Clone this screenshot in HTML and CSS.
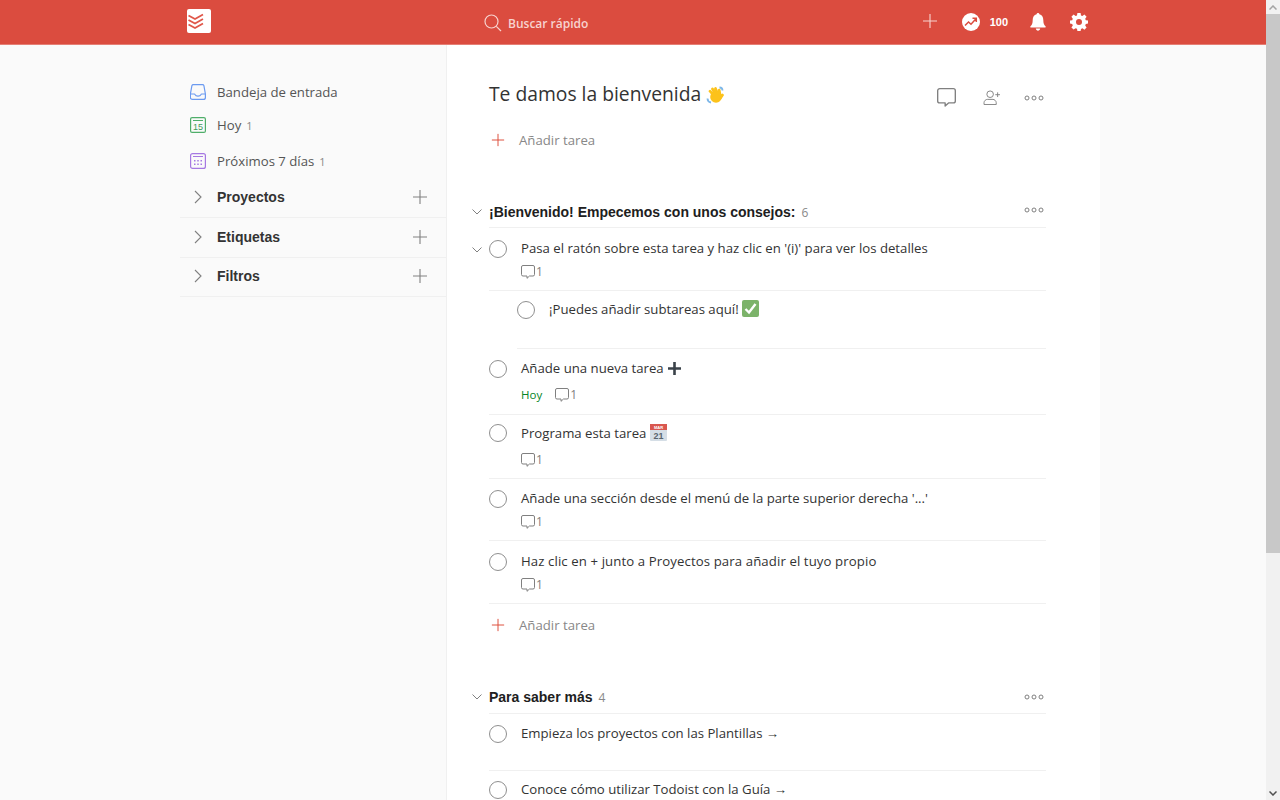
FILE: index.html
```html
<!DOCTYPE html>
<html lang="es">
<head>
    <meta charset="utf-8">
    <title>Te damos la bienvenida: Todoist</title>
    <link rel="stylesheet" href="styles.css">
</head>
<body>
    <svg class="sprites" width="0" height="0">
        <symbol id="chevron-down" viewBox="0 0 10 6"><path d="M.5.5 5 5 9.500.5" fill="none" stroke="currentColor"/></symbol>
        <symbol id="chevron-right" viewBox="0 0 8 14"><path d="M1 1l6 6-6 6" fill="none" stroke="currentColor" stroke-width="1.100"/></symbol>
        <symbol id="plus" viewBox="0 0 16 16"><path d="M8 1v14M1 8h14" fill="none" stroke="currentColor" stroke-width="1.100"/></symbol>
        <symbol id="dots" viewBox="0 0 20 6"><g fill="none" stroke="currentColor"><circle cx="3" cy="3" r="2"/><circle cx="10" cy="3" r="2"/><circle cx="17" cy="3" r="2"/></g></symbol>
        <symbol id="comment" viewBox="0 0 14 14"><path d="M2 .5h10A1.500 1.500 0 0 1 13.500 2v7.500A1.500 1.500 0 0 1 12 11H8.500L6 13.300V11H2A1.500 1.500 0 0 1 .5 9.500V2A1.500 1.500 0 0 1 2 .5z" fill="none" stroke="currentColor" stroke-linejoin="round"/></symbol>
    </svg>

    <div class="window">
        <div class="app">
            <header class="topbar">
                <div class="topbar-inner">
                    <a class="logo">
                        <svg width="24" height="24" viewBox="0 0 24 24">
                            <rect width="24" height="24" rx="2" fill="#fff"/>
                            <path d="M1.500 6.500l6.500 3.500L16 5.500M1.500 11l6.500 3.500L16 10M1.500 15.500l6.500 3.500L16 14.500" fill="none" stroke="#e0574a" stroke-width="1.800"/>
                        </svg>
                    </a>
                    <div class="search">
                        <svg width="18" height="18" viewBox="0 0 18 18"><circle cx="7.500" cy="7.500" r="6.500" fill="none" stroke="#f7d3cf" stroke-width="1.200"/><path d="M12.300 12.300 17 17" stroke="#f7d3cf" stroke-width="1.200"/></svg>
                        <span>Buscar rápido</span>
                    </div>
                    <div class="top-actions">
                        <svg class="top-plus" width="16" height="16"><use href="#plus"/></svg>
                        <svg class="karma-icon" width="18" height="18" viewBox="0 0 18 18">
                            <circle cx="9" cy="9" r="9" fill="#fff"/>
                            <path d="M3 12.500l3.500-3.500 2.500 2.300L14 5.800M10.500 5.300H14.300V9" fill="none" stroke="#db4c3f" stroke-width="1.500"/>
                        </svg>
                        <span class="karma">100</span>
                        <svg class="bell" width="16" height="18" viewBox="0 0 16 18"><path d="M8 0c.8 0 1.400.6 1.400 1.300C12 2 13.300 4 13.300 7c0 3.500.8 5 2.200 6.200.5.500.2 1.300-.5 1.300H1c-.7 0-1-.8-.5-1.300C1.900 12 2.700 10.500 2.700 7c0-3 1.300-5 3.900-5.700C6.600.6 7.200 0 8 0zM5.800 15.500h4.400C10 16.900 9.100 17.700 8 17.700s-2-.8-2.200-2.200z" fill="#fff"/></svg>
                        <svg class="gear" width="18" height="18" viewBox="0 0 18 18"><path fill="#fff" fill-rule="evenodd" d="M7.400 0h3.200l.4 2.400 1.400.6 2-1.400 2.200 2.200-1.400 2 .6 1.400 2.200.4v3l-2.200.5-.6 1.400 1.400 2-2.200 2.200-2-1.400-1.400.6-.4 2.100H7.400L7 15.800l-1.400-.6-2 1.400-2.200-2.200 1.400-2-.6-1.400L0 10.600v-3l2.200-.4.6-1.400-1.400-2 2.200-2.200 2 1.400L7 2.400zM9 6a3 3 0 1 0 0 6 3 3 0 0 0 0-6z"/></svg>
                    </div>
                </div>
            </header>

            <div class="shell">
                <nav class="sidebar">
                    <ul class="filters">
                        <li class="filter filter-inbox">
                            <svg width="16" height="16" viewBox="0 0 16 16"><path d="M3.500.6h9c.7 0 1.200.4 1.400 1l1.500 8.400v3.400a2 2 0 0 1-2 2h-11a2 2 0 0 1-2-2V10l1.500-8.400c.2-.6.700-1 1.400-1zM.6 10h3.700c.4 0 .6.200.7.500.4 1 1.500 1.700 3 1.700s2.600-.7 3-1.700c.1-.3.300-.5.700-.5h3.700" fill="none" stroke="#6b9af0" stroke-width="1.200"/></svg>
                            <span>Bandeja de entrada</span>
                        </li>
                        <li class="filter filter-today">
                            <svg width="16" height="16" viewBox="0 0 16 16"><rect x=".6" y=".6" width="14.800" height="14.800" rx="1.500" fill="none" stroke="#4fae6a" stroke-width="1.200"/><path d="M3 3.500h10" stroke="#4fae6a"/><text x="8" y="13" text-anchor="middle" class="cal-day">15</text></svg>
                            <span>Hoy</span><small>1</small>
                        </li>
                        <li class="filter filter-week">
                            <svg width="16" height="16" viewBox="0 0 16 16"><rect x=".6" y=".6" width="14.800" height="14.800" rx="2" fill="none" stroke="#a678e2" stroke-width="1.200"/><path d="M3 3.500h10" stroke="#a678e2"/><path d="M4 7h1.500v1.500H4zM7.250 7h1.500v1.500h-1.500zM10.500 7H12v1.500h-1.500zM4 10.500h1.500V12H4zM7.250 10.500h1.500V12h-1.500zM10.500 10.500H12V12h-1.500z" fill="#a678e2"/></svg>
                            <span>Próximos 7 días</span><small>1</small>
                        </li>
                    </ul>
                    <div class="group group-projects">
                        <svg class="group-arrow" width="8" height="14"><use href="#chevron-right"/></svg>
                        <span>Proyectos</span>
                        <svg class="group-add" width="16" height="16"><use href="#plus"/></svg>
                    </div>
                    <div class="group group-labels">
                        <svg class="group-arrow" width="8" height="14"><use href="#chevron-right"/></svg>
                        <span>Etiquetas</span>
                        <svg class="group-add" width="16" height="16"><use href="#plus"/></svg>
                    </div>
                    <div class="group group-filters">
                        <svg class="group-arrow" width="8" height="14"><use href="#chevron-right"/></svg>
                        <span>Filtros</span>
                        <svg class="group-add" width="16" height="16"><use href="#plus"/></svg>
                    </div>
                </nav>

                <main class="content">
                    <div class="project-head">
                        <h1>Te damos la bienvenida
                            <svg class="emoji" width="18" height="18" viewBox="0 0 18 18">
                                <path d="M13.500 1.500c1.500 0 3 1.200 3 3M1.500 12.500c0 1.700 1.300 3.500 3.500 4" fill="none" stroke="#7db7e8" stroke-width="1.800"/>
                                <circle cx="10" cy="11" r="5.800" fill="#fcc21b"/>
                                <path d="M7.500 9 4 5.200M9.500 8 6.500 3M11.500 7.500 9.500 2.500M14 8.500l-.8-4.500M14.500 12l2-3" fill="none" stroke="#fcc21b" stroke-width="2.700" stroke-linecap="round"/>
                            </svg>
                        </h1>
                        <div class="project-actions">
                            <svg class="action-comment" width="19" height="19"><use href="#comment"/></svg>
                            <svg class="action-share" width="18" height="15" viewBox="0 0 18 16"><g fill="none" stroke="currentColor"><circle cx="7" cy="4.500" r="3.500"/><path d="M.5 15.500v-2c0-2 2-3.500 3.500-3.500h6c1.500 0 3.500 1.500 3.500 3.500v2zM12.500 5h5M15 2.500v5"/></g></svg>
                            <svg class="action-dots" width="20" height="6"><use href="#dots"/></svg>
                        </div>
                    </div>

                    <div class="add-task add-task-first">
                        <svg width="14" height="14"><use href="#plus"/></svg>
                        <span>Añadir tarea</span>
                    </div>

                    <section class="section section-welcome">
                        <div class="section-head">
                            <svg class="toggle" width="10" height="6"><use href="#chevron-down"/></svg>
                            <h2>¡Bienvenido! Empecemos con unos consejos:</h2>
                            <small>6</small>
                            <svg class="section-dots" width="20" height="6"><use href="#dots"/></svg>
                        </div>

                        <div class="task task-first">
                            <svg class="toggle" width="10" height="6"><use href="#chevron-down"/></svg>
                            <span class="check"></span>
                            <div class="task-body">
                                <div class="task-text">Pasa el ratón sobre esta tarea y haz clic en '(i)' para ver los detalles</div>
                                <div class="task-meta"><span class="comments"><svg width="14" height="14"><use href="#comment"/></svg>1</span></div>
                            </div>
                        </div>

                        <div class="task task-sub">
                            <span class="check"></span>
                            <div class="task-body">
                                <div class="task-text">¡Puedes añadir subtareas aquí!
                                    <svg class="emoji" width="17" height="17" viewBox="0 0 17 17"><rect width="17" height="17" rx="2" fill="#7cb36a"/><path d="M3.500 9l3.500 3.500 6.500-8.500" fill="none" stroke="#fff" stroke-width="2.400"/></svg>
                                </div>
                            </div>
                        </div>

                        <div class="task task-new">
                            <span class="check"></span>
                            <div class="task-body">
                                <div class="task-text">Añade una nueva tarea
                                    <svg class="emoji" width="15" height="15" viewBox="0 0 15 15"><path d="M6.200 1h2.600v5.200H14v2.600H8.800V14H6.200V8.800H1V6.200h5.200z" fill="#3a4249"/></svg>
                                </div>
                                <div class="task-meta task-meta-gap">
                                    <span class="due">Hoy</span>
                                    <span class="comments"><svg width="14" height="14"><use href="#comment"/></svg>1</span>
                                </div>
                            </div>
                        </div>

                        <div class="task task-schedule">
                            <span class="check"></span>
                            <div class="task-body">
                                <div class="task-text">Programa esta tarea
                                    <svg class="emoji" width="17" height="18" viewBox="0 0 17 18"><rect y="1" width="17" height="17" rx="1" fill="#d5dee6"/><rect y="1" width="17" height="6" fill="#d9574f"/><text x="8.500" y="5.500" text-anchor="middle" class="cal-month">MAR</text><text x="8.500" y="15.800" text-anchor="middle" class="cal-date">21</text></svg>
                                </div>
                                <div class="task-meta task-meta-gap"><span class="comments"><svg width="14" height="14"><use href="#comment"/></svg>1</span></div>
                            </div>
                        </div>

                        <div class="task task-menu">
                            <span class="check"></span>
                            <div class="task-body">
                                <div class="task-text">Añade una sección desde el menú de la parte superior derecha '...'</div>
                                <div class="task-meta"><span class="comments"><svg width="14" height="14"><use href="#comment"/></svg>1</span></div>
                            </div>
                        </div>

                        <div class="task task-project">
                            <span class="check"></span>
                            <div class="task-body">
                                <div class="task-text">Haz clic en + junto a Proyectos para añadir el tuyo propio</div>
                                <div class="task-meta"><span class="comments"><svg width="14" height="14"><use href="#comment"/></svg>1</span></div>
                            </div>
                        </div>

                        <div class="add-task add-task-end">
                            <svg width="14" height="14"><use href="#plus"/></svg>
                            <span>Añadir tarea</span>
                        </div>
                    </section>

                    <section class="section section-more">
                        <div class="section-head">
                            <svg class="toggle" width="10" height="6"><use href="#chevron-down"/></svg>
                            <h2>Para saber más</h2>
                            <small>4</small>
                            <svg class="section-dots" width="20" height="6"><use href="#dots"/></svg>
                        </div>
                        <div class="task task-link">
                            <span class="check"></span>
                            <div class="task-body"><div class="task-text">Empieza los proyectos con las Plantillas →</div></div>
                        </div>
                        <div class="task task-link">
                            <span class="check"></span>
                            <div class="task-body"><div class="task-text">Conoce cómo utilizar Todoist con la Guía →</div></div>
                        </div>
                    </section>
                </main>
            </div>
        </div>

        <div class="scrollbar">
            <div class="scroll-btn"><svg width="8" height="5" viewBox="0 0 8 5"><path d="M.5 4.500 4 1l3.500 3.500" fill="none" stroke="#a3a3a3" stroke-width="1.500"/></svg></div>
            <div class="scroll-thumb"></div>
            <div class="scroll-track"></div>
            <div class="scroll-btn"><svg width="8" height="5" viewBox="0 0 8 5"><path d="M.5.500 4 4 7.500.5" fill="none" stroke="#505050" stroke-width="1.500"/></svg></div>
        </div>
    </div>
</body>
</html>
```

FILE: styles.css
```css
* {
  box-sizing: border-box;
}

html, body {
  margin: 0;
  height: 100%;
  overflow: hidden;
}

body {
  font-family: "Open Sans", "Noto Sans", sans-serif;
  font-size: 13.2px;
  color: #333;
  background-color: #fafafa;
}

.sprites {
  position: absolute;
}

.window {
  display: flex;
  height: 100vh;
}

.app {
  flex: 1;
  min-width: 0;
  overflow: hidden;
}

/* barra de rolagem */
.scrollbar {
  display: flex;
  flex-direction: column;
  flex: none;
  width: 14px;
  background-color: #f1f1f1;
}

.scroll-btn {
  display: flex;
  align-items: center;
  justify-content: center;
  height: 14px;
}

.scroll-thumb {
  height: 539px;
  background-color: #c8c8c8;
}

.scroll-track {
  flex: 1;
}

/* barra superior */
.topbar {
  height: 45px;
  background-color: #db4c3f;
  border-bottom: 1px solid #e57f75;
}

.topbar-inner {
  display: flex;
  align-items: center;
  width: 920px;
  height: 44px;
  margin-left: 180px;
}

.logo {
  display: flex;
  width: 266px;
  padding-left: 7px;
  margin-top: -2px;
}

.search {
  display: flex;
  align-items: center;
  gap: 6px;
  margin-top: 2px;
  margin-left: 38px;
  color: #f7d3cf;
  font-size: 12px;
  font-weight: 600;
}

.top-actions {
  display: flex;
  align-items: center;
  margin-left: auto;
  padding-right: 12px;
  color: #fff;
}

.top-plus {
  margin-top: -2px;
  color: #f7d3cf;
}

.karma-icon {
  margin-left: 24px;
}

.karma {
  margin-left: 10px;
  font-family: "Liberation Sans", sans-serif;
  font-size: 11px;
  font-weight: 700;
}

.bell {
  margin-left: 22px;
}

.gear {
  margin-left: 24px;
}

/* colunas */
.shell {
  display: flex;
  width: 920px;
  height: 755px;
  margin-left: 180px;
}

.sidebar {
  width: 266px;
  padding-top: 30px;
  color: #555;
}

.filters {
  list-style: none;
  margin: 0;
  padding: 0;
}

.filter {
  display: flex;
  align-items: center;
  height: 34px;
  padding-left: 10px;
}

.filter-inbox {
  height: 33px;
}

.filter-week {
  height: 37px;
  padding-top: 1px;
}

.filter span {
  margin-left: 11px;
}

.filter small {
  margin-left: 5px;
  font-size: 11px;
  color: #888;
}

.cal-day {
  font-family: "Liberation Sans", sans-serif;
  font-size: 9px;
  fill: #3f9a5a;
}

.group {
  display: flex;
  align-items: center;
  height: 40px;
  padding-left: 14px;
  padding-bottom: 1px;
  border-bottom: 1px solid #f0f0f0;
  font-family: "Liberation Sans", sans-serif;
  font-size: 14px;
  font-weight: 700;
  color: #333;
}

.group-projects {
  height: 39px;
  padding-bottom: 3px;
}

.group-filters {
  height: 39px;
  padding-bottom: 2px;
}

.group-arrow {
  color: #808080;
}

.group span {
  margin-left: 15px;
}

.group-add {
  margin-left: auto;
  margin-right: 18px;
  color: #808080;
}

/* conteudo */
.content {
  width: 654px;
  padding: 0 54px 0 42px;
  background-color: #fff;
  border-left: 1px solid #f0f0f0;
}

.project-head {
  display: flex;
  align-items: center;
  height: 34px;
  margin-top: 32px;
}

h1 {
  margin: 0 0 2px;
  font-size: 19.3px;
  font-weight: 500;
}

.project-actions {
  display: flex;
  align-items: center;
  margin-top: 7px;
  margin-left: auto;
  padding-right: 2px;
  color: #808080;
}

.action-share {
  margin-left: 27px;
}

.action-dots {
  margin-left: 23px;
}

.emoji {
  vertical-align: -3px;
}

.cal-month {
  font-family: "Liberation Sans", sans-serif;
  font-size: 4px;
  font-weight: 700;
  fill: #fff;
}

.cal-date {
  font-family: "Liberation Sans", sans-serif;
  font-size: 9px;
  font-weight: 700;
  fill: #59646e;
}

.add-task {
  display: flex;
  align-items: center;
  gap: 14px;
  height: 44px;
  padding-left: 2px;
  color: #888;
}

.add-task svg {
  color: #dd4b39;
}

.add-task-first {
  margin-top: 7px;
}

.add-task-end {
  height: 43px;
  padding-bottom: 2px;
}

.section-welcome {
  margin-top: 36px;
}

.section-more {
  margin-top: 35px;
}

.section-head {
  display: flex;
  align-items: center;
  height: 30px;
  padding-bottom: 1px;
  border-bottom: 1px solid #f0f0f0;
}

.section-more .section-head {
  height: 32px;
  padding-bottom: 1px;
}

.toggle {
  flex: none;
  margin-left: -17px;
  margin-right: 7px;
  color: #808080;
}

h2 {
  margin: 0;
  font-family: "Liberation Sans", sans-serif;
  font-size: 14px;
  font-weight: 700;
  color: #202020;
}

.section-head small {
  margin-left: 6px;
  font-size: 12px;
  color: #888;
}

.section-dots {
  margin-left: auto;
  color: #808080;
  margin-right: 2px;
}

.section-welcome .section-dots {
  margin-bottom: 4px;
}

.task {
  display: flex;
  align-items: flex-start;
  border-bottom: 1px solid #f0f0f0;
  padding-top: 11px;
}

.task-first { height: 63px; }
.task-sub { height: 58px; margin-left: 28px; padding-top: 9px; }
.task-new { height: 66px; padding-top: 10px; }
.task-schedule { height: 64px; padding-top: 8px; }
.task-menu { height: 62px; padding-top: 10px; }
.task-project { height: 63px; }
.task-project .task-text { letter-spacing: .1px; }
.task-link { height: 57px; padding-top: 10px; }
.task-link:last-child { padding-top: 9px; border-bottom: none; }

.task > .toggle {
  margin-top: 8px;
  margin-right: 7px;
}

.check {
  flex: none;
  width: 18px;
  height: 18px;
  margin-top: 1px;
  border: 1px solid #8f8f8f;
  border-radius: 50%;
}

.task-body {
  margin-left: 14px;
  min-width: 0;
}

.task-text {
  line-height: 18px;
}

.task-meta {
  display: flex;
  align-items: center;
  gap: 13px;
  margin-top: 8px;
  font-size: 11.5px;
  line-height: 14px;
}

.task-meta-gap {
  margin-top: 11px;
}

.due {
  color: #058527;
}

.comments {
  display: flex;
  align-items: center;
  gap: 1px;
  font-size: 12px;
  color: #808080;
}
```
